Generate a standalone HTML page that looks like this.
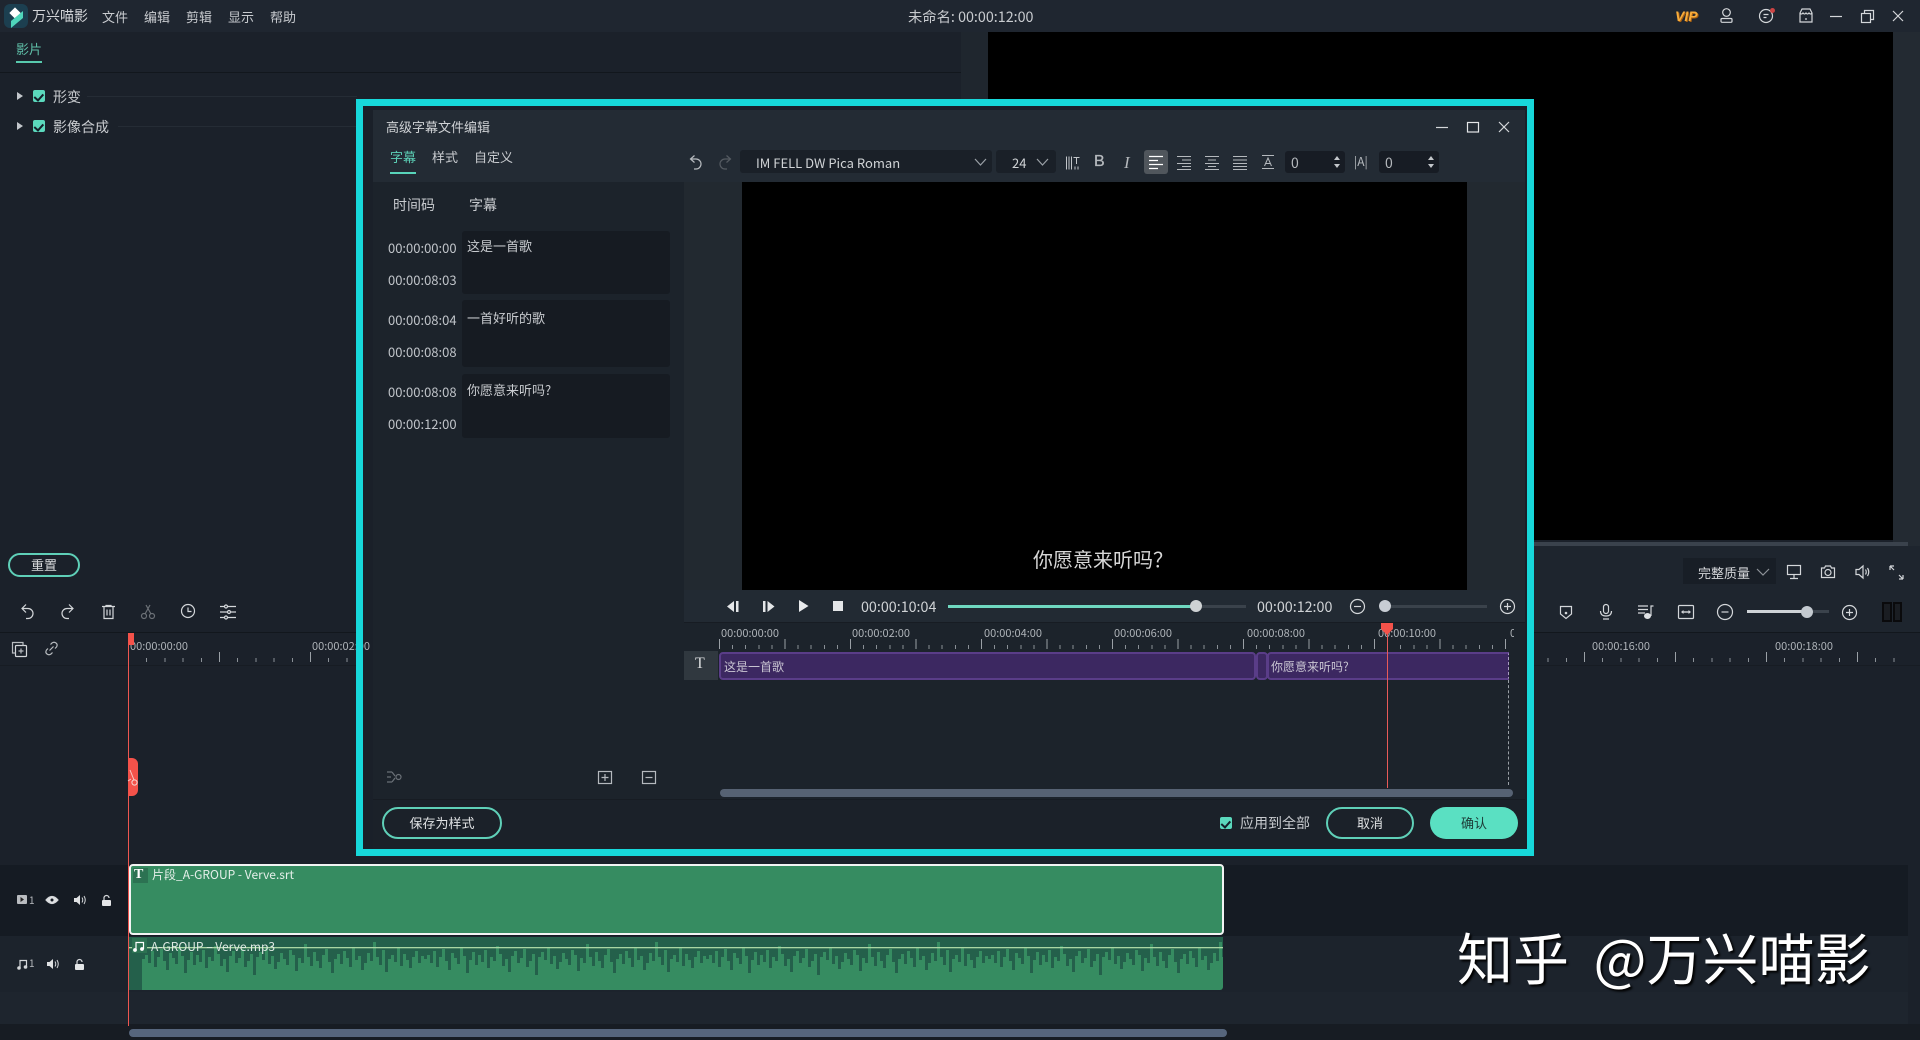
<!DOCTYPE html>
<html lang="zh"><head><meta charset="utf-8"><title>万兴喵影</title>
<style>
html,body{margin:0;padding:0;width:1920px;height:1040px;overflow:hidden;background:#1b212a}
body{position:relative;font-family:"Noto Sans CJK SC","Liberation Sans",sans-serif;color:#c8cbcf;font-size:13px}
.a{position:absolute}
.t{position:absolute;white-space:nowrap;line-height:20px;height:20px}
svg{position:absolute;overflow:visible;fill:none;stroke:#d4d7da;stroke-width:1.2}
.rule{position:absolute;height:10px;background:
 repeating-linear-gradient(90deg,#9aa0a6 0 1px,transparent 1px var(--M)) 0 0/100% 10px no-repeat,
 repeating-linear-gradient(90deg,#8a9096 0 1px,transparent 1px var(--m)) 0 6px/100% 4px no-repeat}
.tc{font-size:13px;color:#bfc3c8}
.rl{font-size:11px;color:#aeb3b8}
.box{position:absolute;background:#161b22;border-radius:3px}
.chk{position:absolute;width:12px;height:12px;background:#5bd9bd;border-radius:2px}
.chk:after{content:"";position:absolute;left:3px;top:1.5px;width:4px;height:6.5px;border:solid #15202a;border-width:0 2px 2px 0;transform:rotate(42deg)}
</style></head><body>

<!-- top bar -->
<div class="a" style="left:0;top:0;width:1920px;height:32px;background:#1f2630"></div>
<div class="a" style="left:4px;top:4px;width:24px;height:24px;border-radius:6px;background:#1c3f50"></div>
<div class="a" style="left:11px;top:9px;width:8px;height:8px;background:#fff;transform:rotate(45deg)"></div>
<div class="a" style="left:11px;top:16px;width:12px;height:7px;background:#4fd6bb;transform:skewY(-40deg)"></div>
<div class="t" style="left:32px;top:6px;font-size:14px;color:#d3d5d8">万兴喵影</div>
<div class="t" style="left:102px;top:7px">文件</div>
<div class="t" style="left:144px;top:7px">编辑</div>
<div class="t" style="left:186px;top:7px">剪辑</div>
<div class="t" style="left:228px;top:7px">显示</div>
<div class="t" style="left:270px;top:7px">帮助</div>
<div class="t" style="left:908px;top:7px;font-size:14.3px;color:#c8cbcf">未命名: 00:00:12:00</div>
<div class="t" style="left:1675px;top:6px;font:italic bold 14px/20px 'Liberation Sans',sans-serif;color:#f8ad3c;text-shadow:1px 1px 0 #a85f10">VIP</div>
<svg style="left:1720px;top:8px" width="13" height="15"><circle cx="6.5" cy="4.5" r="3.8"/><rect x="1" y="10.5" width="11" height="3.8" rx="1"/></svg>
<svg style="left:1759px;top:9px" width="16" height="14"><circle cx="7" cy="7" r="6.5"/><path d="M4.500 5.500h5M4.500 8.500h3"/></svg>
<div class="a" style="left:1770px;top:8px;width:5px;height:5px;background:#c44;border-radius:50%"></div>
<svg style="left:1799px;top:8px" width="14" height="15"><path d="M1 5 3 1h8l2 4v9H1zM1 5q1.500 2 3 0q1.500 2 3 0q1.500 2 3 0q1.500 2 3 0M6 11h2"/></svg>
<svg style="left:1830px;top:10px" width="12" height="12"><path d="M0 6.500h12"/></svg>
<svg style="left:1861px;top:10px" width="13" height="13"><rect x=".5" y="3.500" width="9" height="9"/><path d="M3.500 3.500v-3h9v9h-3"/></svg>
<svg style="left:1893px;top:11px" width="10" height="10"><path d="M0 0 10 10M10 0 0 10"/></svg>

<!-- left top panel -->
<div class="t" style="left:16px;top:39px;color:#5fbfa8">影片</div>
<div class="a" style="left:16px;top:61px;width:26px;height:2px;background:#58c9ad"></div>
<div class="a" style="left:0;top:72px;width:961px;height:1px;background:#12171d"></div>
<div class="a" style="left:961px;top:32px;width:27px;height:70px;background:#1f262e"></div>
<div class="a" style="left:17px;top:92px;border-left:6px solid #c3c7cb;border-top:4px solid transparent;border-bottom:4px solid transparent"></div>
<div class="chk" style="left:33px;top:90px"></div>
<div class="t" style="left:53px;top:87px;font-size:14px">形变</div>
<div class="a" style="left:87px;top:96px;width:270px;height:1px;background:#252c35"></div>
<div class="a" style="left:17px;top:122px;border-left:6px solid #c3c7cb;border-top:4px solid transparent;border-bottom:4px solid transparent"></div>
<div class="chk" style="left:33px;top:120px"></div>
<div class="t" style="left:53px;top:117px;font-size:14px">影像合成</div>
<div class="a" style="left:118px;top:126px;width:238px;height:1px;background:#252c35"></div>
<div class="a" style="left:8px;top:553px;width:68px;height:20px;border:2px solid #5fd0b8;border-radius:12px;text-align:center;line-height:20px;color:#d8dadc">重置</div>

<!-- preview -->
<div class="a" style="left:988px;top:32px;width:905px;height:508px;background:#000"></div>
<div class="a" style="left:1893px;top:32px;width:27px;height:514px;background:#232a32"></div>
<div class="a" style="left:1534px;top:542px;width:374px;height:4px;background:#3a424c"></div>
<div class="a" style="left:1534px;top:546px;width:386px;height:86px;background:#1e252e"></div>
<div class="a" style="left:1683px;top:558px;width:93px;height:26px;background:#181e26"></div>
<div class="t" style="left:1698px;top:563px;color:#d4d6d9">完整质量</div>
<svg style="left:1757px;top:569px" width="12" height="7" ><path d="M0 0 6 6 12 0" stroke="#8d9298"/></svg>
<svg style="left:1787px;top:565px" width="14" height="14"><rect x=".5" y=".5" width="13" height="9"/><path d="M7 10v3M3 13.500h8"/></svg>
<svg style="left:1821px;top:565px" width="14" height="13"><path d="M.5 3h3l1-2h5l1 2h3v9.500H.5z"/><circle cx="7" cy="7.500" r="3"/></svg>
<svg style="left:1855px;top:565px" width="15" height="14"><path d="M1 4.500h3L8 1v12L4 9.500H1zM10.500 4.500q1.500 2.500 0 5M12.500 3q2.500 4 0 8"/></svg>
<svg style="left:1890px;top:566px" width="13" height="13"><path d="M0 0h4M0 0v4M0 0 4 4M13 13H9M13 13V9M13 13 9 9"/></svg>
<svg style="left:1560px;top:605px" width="12" height="14"><path d="M.5 1.500h11V9L6 13.500.5 9z"/><circle cx="6" cy="8" r=".7" fill="#d4d7da"/></svg>
<svg style="left:1600px;top:604px" width="12" height="16"><rect x="3.500" y=".5" width="5" height="9" rx="2.500"/><path d="M.5 7q0 5 5.500 5t5.500-5M3 15h6"/></svg>
<svg style="left:1638px;top:605px" width="16" height="14"><path d="M0 1h10M0 4.500h10M0 8h7M15.500 1H13V11"/></svg>
<div class="a" style="left:1644px;top:613px;width:7px;height:6px;background:#dfe2e5;border-radius:50%"></div>
<svg style="left:1678px;top:605px" width="16" height="14"><rect x=".5" y=".5" width="15" height="13" rx="1"/><path d="M5 7h6" stroke-width="1.400"/><path d="M3 7l2.500-2v4zM13 7l-2.500-2v4z" fill="#d4d7da" stroke="none"/></svg>
<svg style="left:1717px;top:604px" width="16" height="16"><circle cx="8" cy="8" r="7.500"/><path d="M4.500 8h7"/></svg>
<div class="a" style="left:1747px;top:610px;width:56px;height:3px;background:#cfd3d7"></div>
<div class="a" style="left:1803px;top:610px;width:26px;height:3px;background:#3b434c"></div>
<div class="a" style="left:1801px;top:606px;width:12px;height:12px;border-radius:50%;background:#c4cad0"></div>
<svg style="left:1842px;top:605px" width="15" height="15"><circle cx="7.500" cy="7.500" r="7"/><path d="M4 7.500h7M7.500 4v7"/></svg>
<div class="a" style="left:1882px;top:602px;width:6px;height:16px;background:#1a1d22;border:2px solid #0a0a0c"></div>
<div class="a" style="left:1893px;top:602px;width:5px;height:16px;background:#1a1d22;border:2px solid #0a0a0c"></div>

<!-- toolbar -->
<div class="a" style="left:0;top:632px;width:1920px;height:1px;background:#12171d"></div>
<svg style="left:21px;top:604px" width="13" height="15"><path d="M5 .5 1 4.500l4 4M1 4.500h6a5 5 0 0 1 0 10H5"/></svg>
<svg style="left:61px;top:604px" width="13" height="15"><path d="M8 .5l4 4-4 4M12 4.500H6a5 5 0 0 0 0 10h2"/></svg>
<svg style="left:102px;top:605px" width="13" height="14"><path d="M0 1.500h13M4 1.500V.5h5v1M2 1.500V13.500h9V1.500M5 4.500v6M8 4.500v6"/></svg>
<svg style="left:141px;top:605px" width="14" height="14"><circle cx="3" cy="11" r="2.500" stroke="#6b7076"/><circle cx="11" cy="11" r="2.500" stroke="#6b7076"/><path d="M4 9 9 0M10 9 5 0" stroke="#6b7076"/></svg>
<svg style="left:181px;top:604px" width="14" height="14"><circle cx="7" cy="7" r="6.500"/><path d="M7 3.500V7.500h3.500"/></svg>
<svg style="left:220px;top:605px" width="16" height="14"><path d="M0 1.500h4M8 1.500h8M0 7h7M11 7h5M0 12.500h4M8 12.500h8"/><circle cx="6" cy="1.500" r="1.500"/><circle cx="9" cy="7" r="1.500"/><circle cx="6" cy="12.500" r="1.500"/></svg>
<svg style="left:12px;top:642px" width="15" height="15"><rect x="3.500" y="3.500" width="11" height="11" rx="1"/><path d="M11 3.500V.5H.5V11h3M9 6.500v5M6.500 9h5" stroke="#b8bcc0"/></svg>
<svg style="left:45px;top:642px" width="13" height="13"><path d="M5.500 2.500 7 1q2-1.500 4 0t.5 4L10 6.500M7.500 10.500 6 12q-2 1.500-4 0t-.5-4L3 6.500M4.500 8.500l4-4" stroke="#b8bcc0"/></svg>

<!-- timeline ruler -->
<div class="t rl" style="left:130px;top:636px">00:00:00:00</div>
<div class="t rl" style="left:312px;top:636px">00:00:02:00</div>
<div class="t rl" style="left:1592px;top:636px">00:00:16:00</div>
<div class="t rl" style="left:1775px;top:636px">00:00:18:00</div>
<div class="rule" style="left:128px;top:652px;width:1772px;--M:91px;--m:18.200px"></div>
<div class="a" style="left:0;top:665px;width:1920px;height:1px;background:#171c23"></div>

<!-- tracks -->
<div class="a" style="left:0;top:865px;width:1908px;height:71px;background:#151b23"></div>
<div class="a" style="left:0;top:936px;width:1908px;height:56px;background:#1c232c"></div>
<div class="a" style="left:0;top:992px;width:1908px;height:32px;background:#1e252e"></div>
<div class="a" style="left:0;top:1024px;width:1920px;height:16px;background:#171c23"></div>
<div class="a" style="left:129px;top:1029px;width:1098px;height:8px;border-radius:4px;background:#56657c"></div>

<svg style="left:17px;top:895px;stroke:none" width="18" height="10"><rect width="10" height="9" rx="1" fill="#b9bcc0"/><path d="M3.500 2 7 4.500 3.500 7z" fill="#222"/></svg>
<div class="t" style="left:29px;top:890px;font-size:10px;color:#b9bcc0">1</div>
<svg style="left:46px;top:896px" width="12" height="8"><path d="M0 4q6-7 12 0q-6 7-12 0z" fill="#dfe1e3"/><circle cx="6" cy="4" r="1.500" fill="#151b23" stroke="none"/></svg>
<svg style="left:74px;top:895px" width="12" height="10"><path d="M0 3h2.500L6 0v10L2.500 7H0z" fill="#dfe1e3" stroke="none"/><path d="M8 2.500q1.500 2.500 0 5M10 1q2.500 4 0 8" stroke-width="1"/></svg>
<svg style="left:102px;top:895px" width="9" height="11"><path d="M2 5V3a2.500 2.500 0 0 1 5 0" stroke-width="1.200"/><rect y="5" width="9" height="6" rx="1" fill="#e4e6e8" stroke="none"/></svg>
<svg style="left:17px;top:959px" width="10" height="11"><path d="M3 9V1.500h6.500V8" /><circle cx="2" cy="9" r="1.800" fill="#d4d7da" stroke="none"/><circle cx="8.500" cy="8" r="1.800" fill="#d4d7da" stroke="none"/></svg>
<div class="t" style="left:29px;top:953px;font-size:10px;color:#b9bcc0">1</div>
<svg style="left:47px;top:959px" width="12" height="10"><path d="M0 3h2.500L6 0v10L2.500 7H0z" fill="#dfe1e3" stroke="none"/><path d="M8 2.500q1.500 2.500 0 5M10 1q2.500 4 0 8" stroke-width="1"/></svg>
<svg style="left:75px;top:959px" width="9" height="11"><path d="M2 5V3a2.500 2.500 0 0 1 5 0" stroke-width="1.200"/><rect y="5" width="9" height="6" rx="1" fill="#e4e6e8" stroke="none"/></svg>

<!-- video clip -->
<div class="a" style="left:129px;top:864px;width:1091px;height:67px;background:#368c61;border:2px solid #f2f4f3;border-radius:4px"></div>
<div class="a" style="left:133px;top:868px;width:15px;height:15px;background:#2c7252"></div>
<div class="t" style="left:134px;top:865px;font:bold 14px/20px 'Liberation Serif',serif;color:#fff">T</div>
<div class="t" style="left:152px;top:865px;font-size:12px;color:#e4efe9">片段_A-GROUP - Verve.srt</div>

<!-- audio clip -->
<div class="a" style="left:129px;top:937px;width:1094px;height:53px;background:#368c61;border-radius:0 0 3px 3px"></div>
<svg style="left:129px;top:937px;stroke:none;overflow:hidden" width="1094" height="53">
<defs><path id="w" d="M0 0V22h3V18h3V26h3V14h3V30h3V20h3V12h3V24h3V33h3V16h3V21h3V27h3V10h3V19h3V36h3V23h3V15h3V28h3V18h3V25h3V13h3V31h3V20h3V24h3V9h3V17h3V29h3V22h3V35h3V19h3V14h3V26h3V21h3V12h3V30h3V24h3V17h3V38h3V20h3V15h3V23h3V11h3V27h3V19h3V32h3V25h3V16h3V22h3V28h3V13h3V18h3V34h3V21h3V26h3V7h3V20h3V29h3V15h3V24h3V31h3V18h3V12h3V25h3V36h3V22h3V17h3V27h3V14h3V21h3V30h3V10h3V23h3V19h3V33h3V26h3V16h3V24h3V5h3V20h3V28h3V13h3V35h3V22h3V18h3V25h3V11h3V29h3V17h3V23h3V31h3V20h3V14h3V26h3V19h3V0z"/></defs>
<path d="M0 0H13V53H0z" fill="#24604b"/>
<use href="#w" x="13" fill="#24604b"/><use href="#w" x="295" fill="#24604b"/><use href="#w" x="577" fill="#24604b"/><use href="#w" x="859" fill="#24604b"/>
<rect y="10" width="1094" height="1.300" fill="#a9d6a3"/>
</svg>
<div class="a" style="left:132px;top:938px;width:15px;height:15px;background:#2c7252"></div>
<svg style="left:133px;top:941px" width="12" height="11"><path d="M3 9V1.500h7.500V8" stroke="#fff"/><circle cx="2" cy="9" r="1.900" fill="#fff" stroke="none"/><circle cx="9" cy="8" r="1.900" fill="#fff" stroke="none"/></svg>
<div class="t" style="left:151px;top:937px;font-size:12px;color:#dfeae4">A-GROUP – Verve.mp3</div>

<!-- main playhead -->
<div class="a" style="left:128px;top:633px;width:1px;height:393px;background:#ee5650"></div>
<div class="a" style="left:128px;top:633px;width:6px;height:12px;background:#f4524a"></div>
<div class="a" style="left:128px;top:758px;width:10px;height:38px;background:#f4524a;border-radius:0 6px 6px 0"></div>
<svg style="left:128px;top:770px" width="10" height="18"><path d="M2 0 6 10M0 11l3-2" stroke="#f6c8c4" stroke-width="1"/><circle cx="6.500" cy="12.500" r="2.600" stroke="#f6d8d4" stroke-width="1"/></svg>

<!-- teal frame & dialog -->
<div class="a" style="left:356px;top:99px;width:1164px;height:743px;border:7px solid #17d8da;background:#1a2029"></div>
<div class="a" style="left:363px;top:636px;width:9px;height:20px;overflow:hidden"><div class="t rl" style="left:-51px;top:0">00:00:02:00</div></div>
<div class="a" style="left:373px;top:110px;width:1152px;height:72px;background:#232b34"></div>
<div class="a" style="left:373px;top:182px;width:311px;height:618px;background:#1c232b"></div>
<div class="a" style="left:684px;top:182px;width:58px;height:408px;background:#222930"></div>
<div class="a" style="left:1467px;top:182px;width:58px;height:408px;background:#222930"></div>
<div class="a" style="left:742px;top:182px;width:725px;height:408px;background:#000"></div>
<div class="t" style="left:1033px;top:547px;font-size:20px;line-height:24px;height:24px;color:#d8d8d8">你愿意来听吗<span style='font-family:"Noto Sans CJK TC",sans-serif'>？</span></div>
<div class="a" style="left:684px;top:590px;width:841px;height:32px;background:#222a33"></div>
<div class="a" style="left:684px;top:622px;width:841px;height:178px;background:#1c232b"></div>
<div class="a" style="left:373px;top:800px;width:1152px;height:49px;background:#1b2129"></div>
<div class="a" style="left:373px;top:799px;width:1152px;height:1px;background:#171c23"></div>

<div class="t" style="left:386px;top:117px;color:#cfd2d5">高级字幕文件编辑</div>
<svg style="left:1436px;top:122px" width="12" height="10"><path d="M0 5.500h12"/></svg>
<svg style="left:1467px;top:122px" width="12" height="10"><rect x=".5" y=".5" width="11" height="9.500" stroke="#e4e6e8"/></svg>
<svg style="left:1499px;top:122px" width="10" height="10"><path d="M0 0 10 10M10 0 0 10"/></svg>
<div class="t" style="left:390px;top:147px;color:#5cd0b6">字幕</div>
<div class="a" style="left:390px;top:172px;width:26px;height:2px;background:#58d4ba"></div>
<div class="t" style="left:432px;top:147px">样式</div>
<div class="t" style="left:474px;top:147px">自定义</div>
<div class="t" style="left:393px;top:195px;font-size:14px">时间码</div>
<div class="t" style="left:469px;top:195px;font-size:14px">字幕</div>

<div class="box" style="left:462px;top:231px;width:208px;height:63px"></div>
<div class="box" style="left:462px;top:300px;width:208px;height:67px"></div>
<div class="box" style="left:462px;top:374px;width:208px;height:64px"></div>
<div class="t tc" style="left:388px;top:238px">00:00:00:00</div>
<div class="t tc" style="left:388px;top:270px">00:00:08:03</div>
<div class="t tc" style="left:388px;top:310px">00:00:08:04</div>
<div class="t tc" style="left:388px;top:342px">00:00:08:08</div>
<div class="t tc" style="left:388px;top:382px">00:00:08:08</div>
<div class="t tc" style="left:388px;top:414px">00:00:12:00</div>
<div class="t" style="left:467px;top:236px">这是一首歌</div>
<div class="t" style="left:467px;top:308px">一首好听的歌</div>
<div class="t" style="left:467px;top:380px">你愿意来听吗?</div>

<svg style="left:387px;top:771px" width="18" height="12"><path d="M0 1h5M0 6h4M0 11h5M5 1l3 4M5 11l3-4" stroke="#6a7077"/><circle cx="11.500" cy="6" r="2.500" stroke="#6a7077"/></svg>
<svg style="left:598px;top:771px" width="14" height="13"><rect x=".5" y=".5" width="13" height="12" stroke="#b5b9be"/><path d="M3.500 6.500h7M7 3v7" stroke="#b5b9be"/></svg>
<svg style="left:642px;top:771px" width="14" height="13"><rect x=".5" y=".5" width="13" height="12" stroke="#b5b9be"/><path d="M3.500 6.500h7" stroke="#b5b9be"/></svg>

<!-- dialog toolbar -->
<svg style="left:690px;top:155px" width="12" height="15"><path d="M4.500 .5 .5 4l4 3.500M.5 4H6a4.500 4.500 0 0 1 0 10H4" stroke="#b8bcc0"/></svg>
<svg style="left:719px;top:155px" width="12" height="15"><path d="M7.500 .5l4 3.500-4 3.500M11.500 4H6a4.500 4.500 0 0 0 0 10h2" stroke="#555b62"/></svg>
<div class="box" style="left:740px;top:150px;width:252px;height:23px;background:#1a2028"></div>
<div class="t" style="left:756px;top:153px;color:#d0d3d6">IM FELL DW Pica Roman</div>
<svg style="left:975px;top:159px" width="11" height="7"><path d="M0 0 5.500 6 11 0" stroke="#9aa0a6"/></svg>
<div class="box" style="left:996px;top:150px;width:60px;height:23px;background:#1a2028"></div>
<div class="t" style="left:1012px;top:153px;color:#d0d3d6">24</div>
<svg style="left:1037px;top:159px" width="11" height="7"><path d="M0 0 5.500 6 11 0" stroke="#9aa0a6"/></svg>
<svg style="left:1066px;top:156px" width="14" height="14"><path d="M.5 .5v13M3 .5v13M5.500 .5v13M7.500 1.500h6M10.500 1.500V8M9 10.500v3M12 10.500v3" stroke="#c2c6ca" stroke-width="1"/></svg>
<div class="t" style="left:1094px;top:152px;font:16px/20px 'Liberation Sans',sans-serif;color:#b5b9bd;-webkit-text-stroke:.3px #b5b9bd">B</div>
<div class="t" style="left:1124px;top:153px;font:italic 17px/20px 'Liberation Serif',serif;color:#b5b9bd">I</div>
<div class="a" style="left:1144px;top:150px;width:24px;height:24px;background:#50565c;border-radius:3px"></div>
<svg style="left:1149px;top:156px" width="14" height="13"><path d="M0 .5h14M0 4.500h9M0 8.500h14M0 12.500h9" stroke="#fff"/></svg>
<svg style="left:1177px;top:156px" width="14" height="14"><path d="M0 .5h14M5 4h9M0 7.500h14M5 10.500h9M0 13.500h14" stroke="#b5b9bd" stroke-width="1"/></svg>
<svg style="left:1205px;top:156px" width="14" height="14"><path d="M0 .5h14M3 4h8M0 7.500h14M3 10.500h8M0 13.500h14" stroke="#b5b9bd" stroke-width="1"/></svg>
<svg style="left:1233px;top:156px" width="14" height="14"><path d="M0 .5h14M0 4h14M0 7.500h14M0 10.500h14M0 13.500h14" stroke="#b5b9bd" stroke-width="1"/></svg>
<svg style="left:1262px;top:155px" width="12" height="14"><path d="M0 .5h12M0 13.500h12M2.500 11 6 3l3.500 8M3.500 8.500h5" stroke="#b5b9bd" stroke-width="1"/></svg>
<div class="box" style="left:1285px;top:151px;width:60px;height:22px;background:#171c24"></div>
<div class="t" style="left:1291px;top:153px;color:#b5b9bd;font-size:14px">0</div>
<div class="a" style="left:1334px;top:156px;border-bottom:4px solid #c3c7cb;border-left:3px solid transparent;border-right:3px solid transparent"></div>
<div class="a" style="left:1334px;top:164px;border-top:4px solid #c3c7cb;border-left:3px solid transparent;border-right:3px solid transparent"></div>
<div class="t" style="left:1354px;top:152px;color:#b5b9bd;font-size:12px">|A|</div>
<div class="box" style="left:1379px;top:151px;width:60px;height:22px;background:#171c24"></div>
<div class="t" style="left:1385px;top:153px;color:#b5b9bd;font-size:14px">0</div>
<div class="a" style="left:1428px;top:156px;border-bottom:4px solid #c3c7cb;border-left:3px solid transparent;border-right:3px solid transparent"></div>
<div class="a" style="left:1428px;top:164px;border-top:4px solid #c3c7cb;border-left:3px solid transparent;border-right:3px solid transparent"></div>

<!-- player controls -->
<svg style="left:727px;top:601px;stroke:none" width="12" height="11"><path d="M7 0V11L0 5.500zM9 0h2.500V11H9z" fill="#e4e6e8"/></svg>
<svg style="left:763px;top:601px;stroke:none" width="12" height="11"><path d="M0 0h2.500V11H0zM4.500 0 11.500 5.500 4.500 11z" fill="#e4e6e8"/></svg>
<svg style="left:799px;top:600px;stroke:none" width="10" height="12"><path d="M0 0 9.500 6 0 12z" fill="#e8eaec"/></svg>
<div class="a" style="left:833px;top:601px;width:10px;height:10px;background:#e4e6e8"></div>
<div class="t" style="left:861px;top:597px;font-size:14.3px;color:#cfd2d5">00:00:10:04</div>
<div class="a" style="left:948px;top:605px;width:248px;height:3px;background:#6fd8c0"></div>
<div class="a" style="left:1196px;top:605px;width:50px;height:3px;background:#3a424b"></div>
<div class="a" style="left:1190px;top:600px;width:12px;height:12px;border-radius:50%;background:#cfd2d4"></div>
<div class="t" style="left:1257px;top:597px;font-size:14.3px;color:#cfd2d5">00:00:12:00</div>
<svg style="left:1350px;top:599px" width="15" height="15"><circle cx="7.500" cy="7.500" r="7"/><path d="M4 7.500h7"/></svg>
<div class="a" style="left:1380px;top:605px;width:107px;height:3px;background:#3a424b"></div>
<div class="a" style="left:1379px;top:600px;width:12px;height:12px;border-radius:50%;background:#c8cdd4"></div>
<svg style="left:1500px;top:599px" width="15" height="15"><circle cx="7.500" cy="7.500" r="7"/><path d="M4 7.500h7M7.500 4v7"/></svg>

<!-- dialog timeline -->
<div class="a" style="left:684px;top:622px;width:841px;height:1px;background:#171c23"></div>
<div class="t rl" style="left:721px;top:623px">00:00:00:00</div>
<div class="t rl" style="left:852px;top:623px">00:00:02:00</div>
<div class="t rl" style="left:984px;top:623px">00:00:04:00</div>
<div class="t rl" style="left:1114px;top:623px">00:00:06:00</div>
<div class="t rl" style="left:1247px;top:623px">00:00:08:00</div>
<div class="t rl" style="left:1378px;top:623px">00:00:10:00</div>
<div class="a" style="left:1510px;top:623px;width:4px;height:20px;overflow:hidden"><div class="t rl" style="left:0;top:0">0</div></div>
<div class="rule" style="left:719px;top:639px;width:790px;--M:65.500px;--m:13.100px"></div>
<div class="a" style="left:684px;top:651px;width:34px;height:29px;background:#30383f"></div>
<div class="t" style="left:695px;top:654px;font:16px/20px 'Liberation Serif',serif;color:#d8dadc">T</div>
<div class="a" style="left:719px;top:652px;width:533px;height:24px;background:#3c2861;border:2px solid #5a3d88;border-radius:4px"></div>
<div class="a" style="left:1256px;top:652px;width:8px;height:24px;background:#3c2861;border:2px solid #5a3d88;border-radius:4px"></div>
<div class="a" style="left:1267px;top:652px;width:239px;height:24px;background:#3c2861;border:2px solid #5a3d88;border-right:1px dashed #a89cc0;border-radius:4px 0 0 4px"></div>
<div class="t" style="left:724px;top:657px;font-size:12px;color:#c9c5d2">这是一首歌</div>
<div class="t" style="left:1271px;top:657px;font-size:12px;color:#c9c5d2">你愿意来听吗?</div>
<div class="a" style="left:1508px;top:680px;height:105px;border-left:1px dashed #9aa0a6"></div>
<div class="a" style="left:1387px;top:630px;width:1px;height:158px;background:#e85a58"></div>
<div class="a" style="left:1381px;top:623px;width:12px;height:6px;background:#f4524a"></div>
<div class="a" style="left:1381px;top:629px;border-top:6px solid #f4524a;border-left:6px solid transparent;border-right:6px solid transparent"></div>
<div class="a" style="left:720px;top:789px;width:793px;height:8px;border-radius:4px;background:#566273"></div>

<!-- dialog bottom -->
<div class="a" style="left:382px;top:807px;width:116px;height:28px;border:2px solid #5fd0b8;border-radius:16px;text-align:center;line-height:28px;color:#e0e2e4">保存为样式</div>
<div class="chk" style="left:1220px;top:817px"></div>
<div class="t" style="left:1240px;top:813px;font-size:14px">应用到全部</div>
<div class="a" style="left:1326px;top:807px;width:84px;height:28px;border:2px solid #5fd0b8;border-radius:16px;text-align:center;line-height:28px;color:#e0e2e4">取消</div>
<div class="a" style="left:1430px;top:807px;width:88px;height:32px;border-radius:16px;background:#5ae0c2;text-align:center;line-height:32px;color:#1c3a36">确认</div>

<!-- watermark -->
<div class="t" style="left:1457px;top:922px;height:70px;line-height:70px;font-size:56px;word-spacing:12px;color:#fff;text-shadow:2px 2px 2px #000">知乎 @万兴喵影</div>

</body></html>
